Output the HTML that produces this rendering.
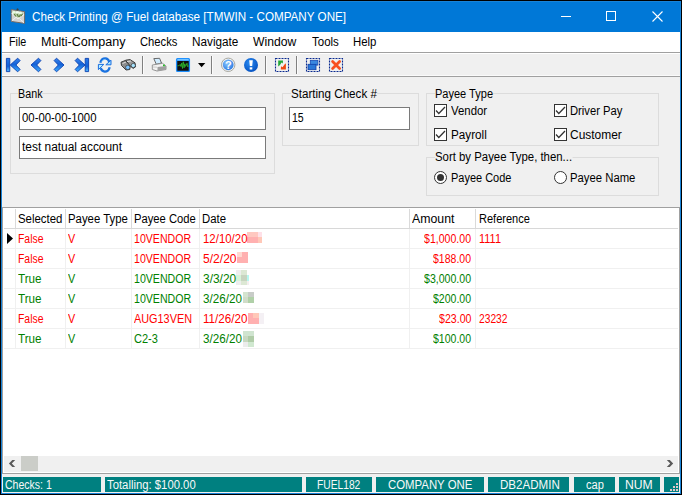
<!DOCTYPE html>
<html><head><meta charset="utf-8">
<style>
*{margin:0;padding:0;box-sizing:border-box}
html,body{width:682px;height:495px;overflow:hidden;background:#000}
body{position:relative;font-family:"Liberation Sans",sans-serif;font-size:12px;color:#000}
.a{position:absolute}
.t{position:absolute;line-height:14px;white-space:nowrap;transform-origin:0 0}
.grp{position:absolute;border:1px solid #dcdcdc}
.tbx{position:absolute;background:#fff;border:1px solid #7a7a7a}
.cb{position:absolute;width:13px;height:13px;border:1px solid #333;background:#fff}
.rb{position:absolute;width:13px;height:13px;border:1px solid #333;border-radius:50%;background:#fff}
.hl{position:absolute;left:4px;width:674px;height:1px;background:#f0f0f0}
.vl{position:absolute;top:208px;width:1px;height:141px;background:#f0f0f0}
.sp{position:absolute;top:477px;height:15px;background:#008080}
</style></head><body>
<div class="a" style="left:1px;top:1px;width:680px;height:493px;background:#1883d7;"></div>
<div class="a" style="left:2px;top:2px;width:678px;height:30px;background:#0078d7;"></div>
<!-- title icon -->
<svg class="a" style="left:0;top:0" width="32" height="32" viewBox="0 0 32 32">
  <polygon points="11.2,9.6 24.6,11.6 24.6,23.4 11.2,21.4" fill="#d4d4d2" stroke="#6e6258" stroke-width="0.9"/>
  <path d="M17.5 8.2 L19 9.3 L17.5 10.4 L16.2 9.3 Z" fill="#404040"/>
  <path d="M11.8 13 L18 18.6 L24 14.5" stroke="#f4f4f4" stroke-width="1.2" fill="none"/>
  <path d="M11.8 20.8 L16.5 17 M24 22.8 L19.5 18.5" stroke="#f0f0f0" stroke-width="1" fill="none"/>
  <path d="M12 11 L23.8 12.8 L21 17 L17.5 17.8 L14 15 Z" fill="#b8cfa8"/>
  <ellipse cx="14" cy="12.2" rx="1.6" ry="1.2" fill="#e8fbe0"/>
  <ellipse cx="17.4" cy="12.4" rx="1.6" ry="1.2" fill="#f0fff0"/>
  <ellipse cx="20.4" cy="13" rx="1.6" ry="1.2" fill="#e8fbe0"/>
  <path d="M14 14 L16 16.5 M17 14 L18.5 16.8 M20.5 14.5 L19 17 M22.5 14 L21 16" stroke="#5c7a3c" stroke-width="1.1"/>
</svg>

<div class="a" style="left:561px;top:16px;width:10px;height:1px;background:#fff;"></div>
<div class="a" style="left:606px;top:11px;width:10px;height:10px;border:1px solid #fff"></div>
<svg class="a" style="left:652px;top:11px" width="11" height="11" viewBox="0 0 11 11"><path d="M0.5 0.5 L10.5 10.5 M10.5 0.5 L0.5 10.5" stroke="#fff" stroke-width="1.1"/></svg>
<div class="a" style="left:2px;top:32px;width:678px;height:20px;background:#fff;"></div>
<div class="a" style="left:2px;top:52px;width:678px;height:25px;background:#f0f0f0;border-top:1px solid #a0a0a0;border-bottom:1px solid #a0a0a0"></div>
<!-- toolbar icons -->
<div class="a" style="left:2px;top:53px;width:678px;height:1px;background:#fff"></div>
<div class="a" style="left:2px;top:75px;width:678px;height:1px;background:#fafafa"></div>
<svg class="a" style="left:0;top:0" width="360" height="80" viewBox="0 0 360 80">
<defs>
<linearGradient id="bl" x1="0" y1="0" x2="0" y2="1"><stop offset="0" stop-color="#3a86ec"/><stop offset="0.45" stop-color="#1462d8"/><stop offset="1" stop-color="#40b0ff"/></linearGradient>
<linearGradient id="blv" x1="0" y1="0" x2="0" y2="1"><stop offset="0" stop-color="#2a7ae8"/><stop offset="0.6" stop-color="#1060d8"/><stop offset="1" stop-color="#58c0ff"/></linearGradient>
<radialGradient id="qg" cx="0.4" cy="0.35" r="0.7"><stop offset="0" stop-color="#8cc8ff"/><stop offset="1" stop-color="#2a78e0"/></radialGradient>
<radialGradient id="eg" cx="0.4" cy="0.35" r="0.7"><stop offset="0" stop-color="#2a8af0"/><stop offset="1" stop-color="#0450c0"/></radialGradient>
</defs>
<g stroke="#0a40b0" stroke-width="0.9" stroke-linejoin="round">
<rect x="6.4" y="58.4" width="3.4" height="13.2" fill="url(#blv)"/>
<polygon points="10.2,65.0 17.7,58.2 20.1,60.6 15.9,65.0 20.1,69.4 17.7,71.8" fill="url(#bl)"/>
<polygon points="31.0,65.0 38.5,58.2 40.9,60.6 36.7,65.0 40.9,69.4 38.5,71.8" fill="url(#bl)"/>
<polygon points="64.0,65.0 56.5,58.2 54.1,60.6 58.3,65.0 54.1,69.4 56.5,71.8" fill="url(#bl)"/>
<polygon points="85.0,65.0 77.5,58.2 75.1,60.6 79.3,65.0 75.1,69.4 77.5,71.8" fill="url(#bl)"/>
<rect x="85.2" y="58.4" width="3.4" height="13.2" fill="url(#blv)"/>
</g>
<!-- refresh -->
<g fill="none" stroke="#1a72e0" stroke-width="2.3" stroke-linecap="butt">
<path d="M100.3 62.8 Q101.5 58.3 105.3 58.4 Q108.3 58.6 109.3 61.8"/>
<path d="M109.7 67.2 Q108.5 71.7 104.7 71.6 Q101.7 71.4 100.7 68.2"/>
</g>
<path d="M101.5 61.5 Q103 59.3 105.5 59.3" stroke="#7cc8ff" stroke-width="0.8" fill="none"/>
<polygon points="111,60.2 111,64.8 105.8,64.8" fill="#a8e4ff" stroke="#1a6ee0" stroke-width="1"/>
<polygon points="98.4,64.4 103.8,64.4 98.4,69.6" fill="#b8eeff" stroke="#1a6ee0" stroke-width="1"/>
<!-- binoculars -->
<polygon points="121,62.2 125,60.6 130,64.5 129.8,69.5 126,70 121.5,65.5" fill="#8c8c8c" stroke="#2c2c2c" stroke-width="0.9" stroke-linejoin="round"/>
<polygon points="125.5,60.2 130,59.6 135,62.8 135.6,66.8 133.2,68.4 130.2,66" fill="#9a9a9a" stroke="#2c2c2c" stroke-width="0.9" stroke-linejoin="round"/>
<path d="M122.5 63.5 L126 62 M127 61.5 L131 61" stroke="#e8e8e8" stroke-width="0.9"/>
<circle cx="127.8" cy="67.4" r="2.2" fill="#7cc4ff" stroke="#2c2c2c" stroke-width="0.6"/>
<circle cx="133.3" cy="65.5" r="2.1" fill="#a8e4ff" stroke="#2c2c2c" stroke-width="0.6"/>
<!-- separators -->
<rect x="142" y="56" width="1" height="18" fill="#808080"/><rect x="143" y="56" width="1" height="18" fill="#fbfbfb"/>
<rect x="211" y="56" width="1" height="18" fill="#808080"/><rect x="212" y="56" width="1" height="18" fill="#fbfbfb"/>
<rect x="265" y="56" width="1" height="18" fill="#808080"/><rect x="266" y="56" width="1" height="18" fill="#fbfbfb"/>
<rect x="296" y="56" width="1" height="18" fill="#808080"/><rect x="297" y="56" width="1" height="18" fill="#fbfbfb"/>
<!-- printer -->
<polygon points="153.8,58.6 159.6,58.3 161.5,63 156.3,64.3" fill="#d0ecff" stroke="#5a5a5a" stroke-width="0.9"/>
<path d="M152.3 65 L162.5 63.3 L166 66 L166 69.5 L157 71 L152.3 69.5 Z" fill="#f2f2f2" stroke="#8a8a8a" stroke-width="0.9"/>
<path d="M157.5 67 L166 66 L166 69.5 L157.5 71 Z" fill="#a0a0a0"/>
<path d="M153 67 L157 67.2" stroke="#c0c0c0" stroke-width="0.8"/>
<rect x="163" y="64.6" width="1.8" height="1.6" fill="#20c020"/>
<!-- monitor -->
<rect x="176.6" y="58.6" width="12.8" height="12.8" rx="1" fill="#101010" stroke="#1e90ff" stroke-width="1.3"/>
<rect x="177" y="59" width="12" height="2" fill="#2a9cff"/>
<rect x="177.5" y="59.4" width="11" height="0.8" fill="#a8dcff"/>
<path d="M177.5 65.8 L179.3 65.6 L180.2 64.4 L181 66.6 L181.8 63 L182.5 68.5 L183.3 61.8 L184.1 67.8 L184.8 63.8 L185.5 66.4 L186.3 65.2 L187 63.2 L187.7 66.8 L188.6 65.6" stroke="#30c830" stroke-width="0.75" fill="none" stroke-linejoin="round"/>
<polygon points="198,63 205.3,63 201.65,67.2" fill="#000"/>
<!-- help -->
<circle cx="228.2" cy="64.8" r="6.7" fill="#f4f4f4" stroke="#a8a8a0" stroke-width="1"/>
<circle cx="228.2" cy="64.8" r="5.4" fill="url(#qg)"/>
<text x="228.3" y="68.9" font-family="Liberation Sans" font-weight="bold" font-size="11" fill="#fff" text-anchor="middle">?</text>
<circle cx="251" cy="65" r="7" fill="url(#eg)"/>
<polygon points="249.2,60.3 252.8,60.3 252.2,66 249.8,66" fill="#fff"/>
<rect x="249.7" y="67.3" width="2.6" height="2.2" fill="#fff"/>
<!-- dotted boxes -->
<g fill="none" stroke="#0a2a90" stroke-width="1.1" stroke-dasharray="2,1">
<rect x="275.5" y="58.5" width="13" height="13"/>
<rect x="306.5" y="58.5" width="13" height="13"/>
<rect x="329.5" y="58.5" width="13" height="13"/>
</g>
<path d="M278.2 66.5 L278.2 60.4 L283 60.4 L282.8 63.5 L281.5 62.6 L280 65 Z" fill="#22a838"/>
<path d="M285.9 63.3 L285.9 69.6 L280.8 69.6 L281 66.2 L282.5 67.2 L284.5 64.5 Z" fill="#f04a10"/>
<rect x="310.3" y="60.3" width="7.6" height="4.8" fill="#3a88e0" stroke="#1848b0" stroke-width="0.8"/>
<rect x="308" y="64.3" width="8" height="5.4" fill="#2a78d8" stroke="#1040a8" stroke-width="0.8"/>
<path d="M332.6 61.5 L339.6 68.5 M339.6 61.5 L332.6 68.5" stroke="#f85020" stroke-width="2.8" stroke-linecap="round"/>
</svg>
<div class="a" style="left:2px;top:77px;width:678px;height:130px;background:#f0f0f0;"></div>
<div class="grp" style="left:10px;top:93px;width:265px;height:81px"></div>
<div class="tbx" style="left:19px;top:107px;width:247px;height:23px"></div>
<div class="tbx" style="left:19px;top:136px;width:247px;height:23px"></div>
<div class="grp" style="left:282px;top:93px;width:137px;height:53px"></div>
<div class="tbx" style="left:289px;top:107px;width:121px;height:23px"></div>
<div class="grp" style="left:426px;top:93px;width:233px;height:53px"></div>
<div class="grp" style="left:426px;top:157px;width:233px;height:39px"></div>
<div class="cb" style="left:434px;top:104px"></div><svg class="a" style="left:434px;top:104px" width="13" height="13"><path d="M2 6.5 L4.8 9.5 L11 3" stroke="#333" stroke-width="1.3" fill="none"/></svg>
<div class="cb" style="left:434px;top:128px"></div><svg class="a" style="left:434px;top:128px" width="13" height="13"><path d="M2 6.5 L4.8 9.5 L11 3" stroke="#333" stroke-width="1.3" fill="none"/></svg>
<div class="cb" style="left:554px;top:104px"></div><svg class="a" style="left:554px;top:104px" width="13" height="13"><path d="M2 6.5 L4.8 9.5 L11 3" stroke="#333" stroke-width="1.3" fill="none"/></svg>
<div class="cb" style="left:554px;top:128px"></div><svg class="a" style="left:554px;top:128px" width="13" height="13"><path d="M2 6.5 L4.8 9.5 L11 3" stroke="#333" stroke-width="1.3" fill="none"/></svg>
<div class="rb" style="left:434px;top:171px"></div>
<div class="a" style="left:437px;top:174px;width:7px;height:7px;border-radius:50%;background:#333"></div>
<div class="rb" style="left:554px;top:171px"></div>
<div class="a" style="left:2px;top:207px;width:678px;height:267px;background:#fff;border:1px solid #a0a0a0"></div>
<div class="hl" style="top:248px"></div>
<div class="hl" style="top:268px"></div>
<div class="hl" style="top:288px"></div>
<div class="hl" style="top:308px"></div>
<div class="hl" style="top:328px"></div>
<div class="hl" style="top:348px"></div>
<div class="a" style="left:4px;top:228px;width:674px;height:1px;background:#d8d8d8;"></div>
<div class="a" style="left:15px;top:209px;width:1px;height:19px;background:#dadada;"></div>
<div class="a" style="left:15px;top:229px;width:1px;height:120px;background:#f0f0f0;"></div>
<div class="a" style="left:65px;top:209px;width:1px;height:19px;background:#dadada;"></div>
<div class="a" style="left:65px;top:229px;width:1px;height:120px;background:#f0f0f0;"></div>
<div class="a" style="left:131px;top:209px;width:1px;height:19px;background:#dadada;"></div>
<div class="a" style="left:131px;top:229px;width:1px;height:120px;background:#f0f0f0;"></div>
<div class="a" style="left:199px;top:209px;width:1px;height:19px;background:#dadada;"></div>
<div class="a" style="left:199px;top:229px;width:1px;height:120px;background:#f0f0f0;"></div>
<div class="a" style="left:409px;top:209px;width:1px;height:19px;background:#dadada;"></div>
<div class="a" style="left:409px;top:229px;width:1px;height:120px;background:#f0f0f0;"></div>
<div class="a" style="left:475px;top:209px;width:1px;height:19px;background:#dadada;"></div>
<div class="a" style="left:475px;top:229px;width:1px;height:120px;background:#f0f0f0;"></div>
<div class="a" style="left:247px;top:232px;width:11px;height:5px;background:#ffc8c0;"></div>
<div class="a" style="left:258px;top:232px;width:4px;height:5px;background:#ffe0e8;"></div>
<div class="a" style="left:247px;top:237px;width:11px;height:6px;background:#ffb0b0;"></div>
<div class="a" style="left:258px;top:237px;width:4px;height:6px;background:#ffc8b8;"></div>
<div class="a" style="left:237px;top:252px;width:11px;height:11px;background:#ffb0b0;"></div>
<div class="a" style="left:237px;top:252px;width:5px;height:5px;background:#ffd8d0;"></div>
<div class="a" style="left:236px;top:270px;width:5px;height:5px;background:#eeeeee;"></div>
<div class="a" style="left:236px;top:275px;width:5px;height:6px;background:#d8f4d8;"></div>
<div class="a" style="left:236px;top:281px;width:5px;height:4px;background:#eeeeee;"></div>
<div class="a" style="left:241px;top:270px;width:6px;height:5px;background:#dce8d4;"></div>
<div class="a" style="left:241px;top:275px;width:6px;height:6px;background:#c8d4c0;"></div>
<div class="a" style="left:241px;top:281px;width:6px;height:4px;background:#dce8d4;"></div>
<div class="a" style="left:247px;top:275px;width:2px;height:6px;background:#b8f8f0;"></div>
<div class="a" style="left:247px;top:281px;width:2px;height:4px;background:#f4eef0;"></div>
<div class="a" style="left:243px;top:292px;width:5px;height:5px;background:#d4e4d0;"></div>
<div class="a" style="left:248px;top:292px;width:6px;height:5px;background:#c8ccc8;"></div>
<div class="a" style="left:243px;top:297px;width:5px;height:6px;background:#d0dcc8;"></div>
<div class="a" style="left:248px;top:297px;width:6px;height:6px;background:#b0d0a8;"></div>
<div class="a" style="left:248px;top:313px;width:11px;height:11px;background:#ffb0b0;"></div>
<div class="a" style="left:253px;top:313px;width:6px;height:5px;background:#ffc8b8;"></div>
<div class="a" style="left:259px;top:313px;width:5px;height:11px;background:#f4f0f4;"></div>
<div class="a" style="left:243px;top:331px;width:11px;height:5px;background:#d0e4d0;"></div>
<div class="a" style="left:243px;top:336px;width:5px;height:6px;background:#c8d8c0;"></div>
<div class="a" style="left:248px;top:336px;width:6px;height:6px;background:#b0cca8;"></div>
<div class="a" style="left:243px;top:342px;width:5px;height:5px;background:#ececec;"></div>
<div class="a" style="left:248px;top:342px;width:6px;height:5px;background:#d0e8d0;"></div>
<svg class="a" style="left:7px;top:233px" width="8" height="12"><path d="M0 0 L6 5.5 L0 11 Z" fill="#000"/></svg>
<div class="a" style="left:4px;top:456px;width:674px;height:16px;background:#f0f0f0;"></div>
<div class="a" style="left:21px;top:456px;width:17px;height:15px;background:#cbcdc8;"></div>
<svg class="a" style="left:0;top:440px" width="682" height="40" viewBox="0 440 682 40"><polygon points="8.9,463.5 12.3,460 15.2,460 11.8,463.5 15.2,467 12.3,467" fill="#5a5a5a"/><polygon points="673.2,463.5 669.8,460 666.8,460 670.2,463.5 666.8,467 669.8,467" fill="#5a5a5a"/></svg>
<div class="a" style="left:2px;top:474px;width:678px;height:19px;background:#f0f0f0;"></div>
<div class="sp" style="left:3px;width:98px"></div>
<div class="sp" style="left:105px;width:197px"></div>
<div class="sp" style="left:306px;width:66px"></div>
<div class="sp" style="left:376px;width:108px"></div>
<div class="sp" style="left:488px;width:81px"></div>
<div class="sp" style="left:574px;width:41px"></div>
<div class="sp" style="left:619px;width:41px"></div>
<div class="sp" style="left:664px;width:15px"></div>
<div class="a" style="left:676px;top:483px;width:2px;height:2px;background:#e4c8c8;"></div>
<div class="a" style="left:673px;top:486px;width:2px;height:2px;background:#e4c8c8;"></div>
<div class="a" style="left:676px;top:486px;width:2px;height:2px;background:#e4c8c8;"></div>
<div class="a" style="left:670px;top:489px;width:2px;height:2px;background:#e4c8c8;"></div>
<div class="a" style="left:673px;top:489px;width:2px;height:2px;background:#e4c8c8;"></div>
<div class="a" style="left:676px;top:489px;width:2px;height:2px;background:#e4c8c8;"></div>
<div class="t" style="left:32.00px;top:10px;transform:scaleX(0.9720);color:#fff">Check Printing @ Fuel database [TMWIN - COMPANY ONE]</div>
<div class="t" style="left:9.40px;top:35px;transform:scaleX(0.8951);">File</div>
<div class="t" style="left:41.00px;top:35px;transform:scaleX(1.0472);">Multi-Company</div>
<div class="t" style="left:140.00px;top:35px;transform:scaleX(0.9347);">Checks</div>
<div class="t" style="left:192.30px;top:35px;transform:scaleX(0.9793);">Navigate</div>
<div class="t" style="left:253.30px;top:35px;transform:scaleX(1.0160);">Window</div>
<div class="t" style="left:311.80px;top:35px;transform:scaleX(0.9567);">Tools</div>
<div class="t" style="left:353.30px;top:35px;transform:scaleX(0.9478);">Help</div>
<div class="t" style="left:18.20px;top:87px;transform:scaleX(0.8959);background:#f0f0f0">Bank</div>
<div class="t" style="left:22.00px;top:111px;transform:scaleX(0.9462);">00-00-00-1000</div>
<div class="t" style="left:22.00px;top:140px;transform:scaleX(0.9931);">test natual account</div>
<div class="t" style="left:290.50px;top:87px;transform:scaleX(0.9681);background:#f0f0f0">Starting Check #</div>
<div class="t" style="left:292.20px;top:111px;transform:scaleX(0.8776);">15</div>
<div class="t" style="left:434.60px;top:87px;transform:scaleX(0.9184);background:#f0f0f0">Payee Type</div>
<div class="t" style="left:450.90px;top:104px;transform:scaleX(0.9491);">Vendor</div>
<div class="t" style="left:450.90px;top:128px;transform:scaleX(0.9746);">Payroll</div>
<div class="t" style="left:570.00px;top:104px;transform:scaleX(0.9356);">Driver Pay</div>
<div class="t" style="left:570.00px;top:128px;transform:scaleX(0.9958);">Customer</div>
<div class="t" style="left:434.60px;top:150px;transform:scaleX(0.9486);background:#f0f0f0">Sort by Payee Type, then...</div>
<div class="t" style="left:450.90px;top:171px;transform:scaleX(0.9145);">Payee Code</div>
<div class="t" style="left:570.00px;top:171px;transform:scaleX(0.9427);">Payee Name</div>
<div class="t" style="left:17.90px;top:212px;transform:scaleX(0.9516);">Selected</div>
<div class="t" style="left:68.20px;top:212px;transform:scaleX(0.9466);">Payee Type</div>
<div class="t" style="left:134.30px;top:212px;transform:scaleX(0.9341);">Payee Code</div>
<div class="t" style="left:202.00px;top:212px;transform:scaleX(0.9465);">Date</div>
<div class="t" style="left:412.30px;top:212px;transform:scaleX(1.0257);">Amount</div>
<div class="t" style="left:478.60px;top:212px;transform:scaleX(0.9194);">Reference</div>
<div class="t" style="left:17.90px;top:232px;transform:scaleX(0.8696);color:#f00">False</div>
<div class="t" style="left:67.60px;top:232px;transform:scaleX(0.9000);color:#f00">V</div>
<div class="t" style="left:134.40px;top:232px;transform:scaleX(0.8828);color:#f00">10VENDOR</div>
<div class="t" style="left:202.70px;top:232px;transform:scaleX(0.9524);color:#f00">12/10/20</div>
<div class="t" style="left:424.40px;top:232px;transform:scaleX(0.8806);color:#f00">$1,000.00</div>
<div class="t" style="left:478.50px;top:232px;transform:scaleX(0.9158);color:#f00">1111</div>
<div class="t" style="left:17.90px;top:252px;transform:scaleX(0.8696);color:#f00">False</div>
<div class="t" style="left:67.60px;top:252px;transform:scaleX(0.9000);color:#f00">V</div>
<div class="t" style="left:134.40px;top:252px;transform:scaleX(0.8828);color:#f00">10VENDOR</div>
<div class="t" style="left:202.70px;top:252px;transform:scaleX(1.0062);color:#f00">5/2/20</div>
<div class="t" style="left:433.40px;top:252px;transform:scaleX(0.8764);color:#f00">$188.00</div>
<div class="t" style="left:17.90px;top:272px;transform:scaleX(0.9693);color:#008000">True</div>
<div class="t" style="left:67.60px;top:272px;transform:scaleX(0.9000);color:#008000">V</div>
<div class="t" style="left:134.40px;top:272px;transform:scaleX(0.8828);color:#008000">10VENDOR</div>
<div class="t" style="left:202.70px;top:272px;transform:scaleX(0.9944);color:#008000">3/3/20</div>
<div class="t" style="left:424.40px;top:272px;transform:scaleX(0.8806);color:#008000">$3,000.00</div>
<div class="t" style="left:17.90px;top:292px;transform:scaleX(0.9693);color:#008000">True</div>
<div class="t" style="left:67.60px;top:292px;transform:scaleX(0.9000);color:#008000">V</div>
<div class="t" style="left:134.40px;top:292px;transform:scaleX(0.8828);color:#008000">10VENDOR</div>
<div class="t" style="left:202.70px;top:292px;transform:scaleX(0.9712);color:#008000">3/26/20</div>
<div class="t" style="left:433.40px;top:292px;transform:scaleX(0.8764);color:#008000">$200.00</div>
<div class="t" style="left:17.90px;top:312px;transform:scaleX(0.8696);color:#f00">False</div>
<div class="t" style="left:67.60px;top:312px;transform:scaleX(0.9000);color:#f00">V</div>
<div class="t" style="left:134.40px;top:312px;transform:scaleX(0.9059);color:#f00">AUG13VEN</div>
<div class="t" style="left:202.70px;top:312px;transform:scaleX(0.9708);color:#f00">11/26/20</div>
<div class="t" style="left:438.90px;top:312px;transform:scaleX(0.8858);color:#f00">$23.00</div>
<div class="t" style="left:478.50px;top:312px;transform:scaleX(0.8547);color:#f00">23232</div>
<div class="t" style="left:17.90px;top:332px;transform:scaleX(0.9693);color:#008000">True</div>
<div class="t" style="left:67.60px;top:332px;transform:scaleX(0.9000);color:#008000">V</div>
<div class="t" style="left:134.40px;top:332px;transform:scaleX(0.9189);color:#008000">C2-3</div>
<div class="t" style="left:202.70px;top:332px;transform:scaleX(0.9712);color:#008000">3/26/20</div>
<div class="t" style="left:433.40px;top:332px;transform:scaleX(0.8764);color:#008000">$100.00</div>
<div class="t" style="left:4.50px;top:478px;transform:scaleX(0.8774);color:#f8f8f8">Checks: 1</div>
<div class="t" style="left:106.60px;top:478px;transform:scaleX(0.9428);color:#f8f8f8">Totalling: $100.00</div>
<div class="t" style="left:317.40px;top:478px;transform:scaleX(0.8545);color:#f8f8f8">FUEL182</div>
<div class="t" style="left:387.50px;top:478px;transform:scaleX(0.9482);color:#f8f8f8">COMPANY ONE</div>
<div class="t" style="left:499.50px;top:478px;transform:scaleX(0.9634);color:#f8f8f8">DB2ADMIN</div>
<div class="t" style="left:585.60px;top:478px;transform:scaleX(0.9251);color:#f8f8f8">cap</div>
<div class="t" style="left:625.30px;top:478px;transform:scaleX(1.0135);color:#f8f8f8">NUM</div>
</body></html>
